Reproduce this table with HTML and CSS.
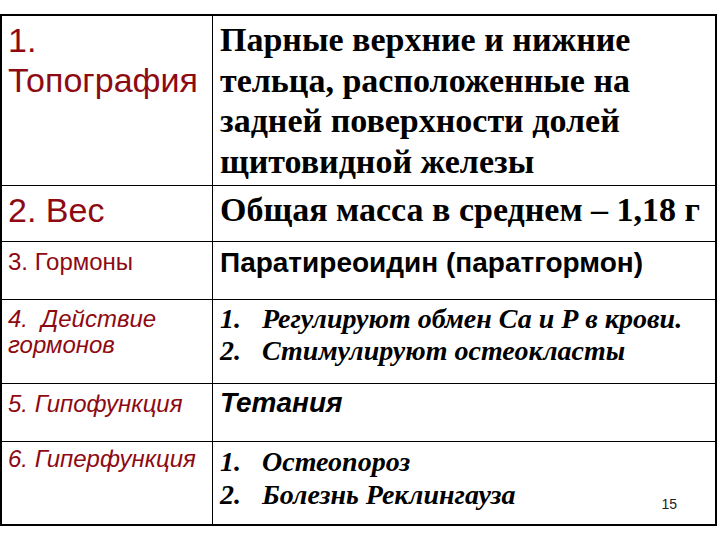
FILE: index.html
```html
<!DOCTYPE html>
<html lang="ru">
<head>
<meta charset="utf-8">
<title>Паращитовидные железы</title>
<link rel="stylesheet" href="styles.css">
</head>
<body>
<div class="table">
  <div class="cell left r1"><div class="big">1.<br>Топография</div></div>
  <div class="cell right r1"><div class="serif">Парные верхние и нижние<br>тельца, расположенные на<br>задней поверхности долей<br>щитовидной железы</div></div>

  <div class="cell left r2"><div class="big">2. Вес</div></div>
  <div class="cell right r2"><div class="serif">Общая масса в среднем – 1,18 г</div></div>

  <div class="cell left r3"><div class="small">3. Гормоны</div></div>
  <div class="cell right r3"><div class="sansbold">Паратиреоидин (паратгормон)</div></div>

  <div class="cell left r4"><div class="small italic">4.&nbsp; Действие<br>гормонов</div></div>
  <div class="cell right r4">
    <ol class="list">
      <li><span class="num">1.</span><span>Регулируют обмен Са и Р в крови.</span></li>
      <li><span class="num">2.</span><span>Стимулируют остеокласты</span></li>
    </ol>
  </div>

  <div class="cell left r5"><div class="small italic">5. Гипофункция</div></div>
  <div class="cell right r5"><div class="sansbold italic big2">Тетания</div></div>

  <div class="cell left r6"><div class="small italic">6. Гиперфункция</div></div>
  <div class="cell right r6 last">
    <ol class="list list6">
      <li><span class="num">1.</span><span>Остеопороз</span></li>
      <li><span class="num">2.</span><span>Болезнь Реклингауза</span></li>
    </ol>
    <span class="page">15</span>
  </div>
</div>
</body>
</html>
```
FILE: styles.css
```css
html, body {
  margin: 0;
  padding: 0;
  background: #ffffff;
}

.table {
  margin-top: 14px;
  width: 713px;
  display: grid;
  grid-template-columns: 210px 502px;
  grid-template-rows: 169px 55px 57px 83px 57px 82px;
  gap: 1px;
  background: #000000;
  border: 2px solid #000000;
}

.cell {
  background: #ffffff;
  box-sizing: border-box;
}

.left {
  padding-left: 6px;
  color: #8e0a12;
  font-family: "Liberation Sans", Arial, sans-serif;
}

.right {
  padding-left: 7px;
  color: #000000;
}

.big {
  font-size: 34px;
  line-height: 40px;
  white-space: nowrap;
}

.serif {
  font-family: "Liberation Serif", "Times New Roman", serif;
  font-weight: bold;
  font-size: 34px;
  line-height: 40.5px;
  white-space: nowrap;
}

.small {
  font-size: 24px;
  line-height: 26px;
  white-space: nowrap;
}

.italic {
  font-style: italic;
}

.sansbold {
  font-family: "Liberation Sans", Arial, sans-serif;
  font-weight: bold;
  font-size: 28px;
  line-height: 32px;
}

.big2 {
  font-size: 28px;
  line-height: 30px;
}

.left.r1, .right.r1 { padding-top: 4px; }
.r2 { padding-top: 4px; }
.left.r3 { padding-top: 7px; }
.right.r3 { padding-top: 5px; }
.left.r4 { padding-top: 6px; }
.right.r4 { padding-top: 3px; }
.left.r5 { padding-top: 7px; }
.right.r5 { padding-top: 4px; }
.left.r6 { padding-top: 4px; }
.right.r6 { padding-top: 3px; }

.list {
  margin: 0;
  padding: 0;
  list-style: none;
  font-family: "Liberation Serif", "Times New Roman", serif;
  font-weight: bold;
  font-style: italic;
  font-size: 28px;
  line-height: 32px;
}

.list6 {
  line-height: 33px;
}

.list li {
  display: flex;
  white-space: nowrap;
}

.num {
  width: 42px;
  flex: none;
}

.last {
  display: flex;
  justify-content: space-between;
  align-items: flex-start;
}

.page {
  align-self: flex-end;
  margin-right: 38px;
  margin-bottom: 12px;
  font-family: "Liberation Sans", Arial, sans-serif;
  font-size: 14px;
  line-height: 16px;
  color: #222222;
}
```
